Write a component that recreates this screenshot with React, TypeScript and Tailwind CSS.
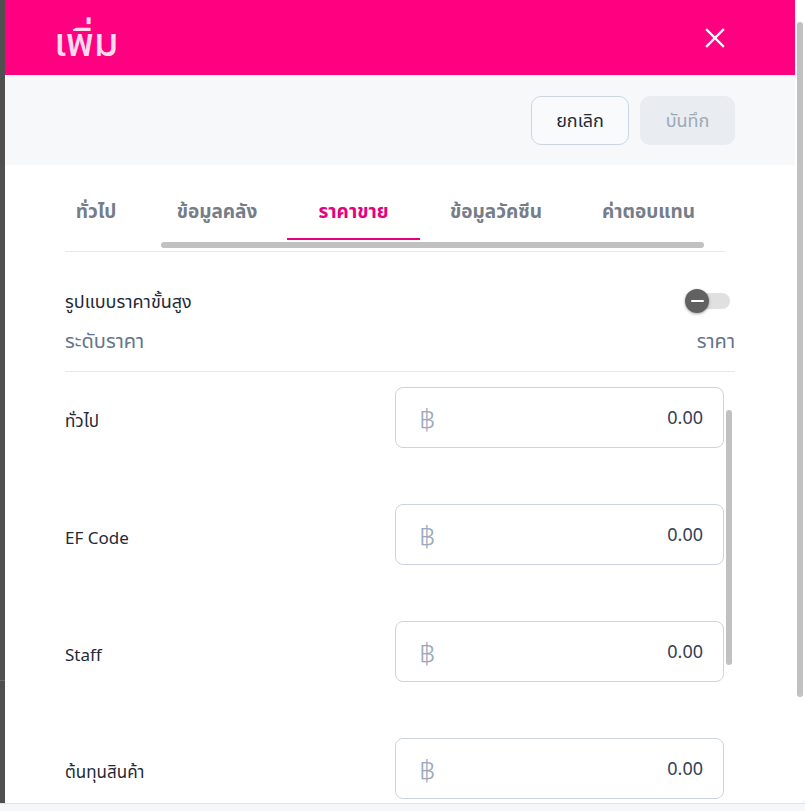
import React from "react";

const tabs = [
  { t: "ทั่วไป", w: "w-[102px]" },
  { t: "ข้อมูลคลัง", w: "w-[140px]" },
  { t: "ราคาขาย", w: "w-[133px]" },
  { t: "ข้อมูลวัคซีน", w: "w-[152px]" },
  { t: "ค่าตอบแทน", w: "w-[153px]" },
];
const rows = ["ทั่วไป", "EF Code", "Staff", "ต้นทุนสินค้า"];

function PriceInput() {
  return (
    <div className="w-[329px] h-[61px] shrink-0 rounded-[8px] border border-[#cbd5e1] bg-white flex items-center justify-between pl-[23px] pr-[20px]">
      <span className="text-[28px] font-light text-[#9aa8bc] leading-none">฿</span>
      <span className="text-[18px] text-[#334155]">0.00</span>
    </div>
  );
}

export default function App() {
  return (
    <div
      className="w-[805px] h-[811px] overflow-hidden bg-[#f5f7fa] flex flex-col"
      style={{ fontFamily: '"Noto Sans", "Noto Sans Thai", sans-serif' }}
    >
      <div className="h-[803px] flex shrink-0">
        {/* backdrop strip */}
        <div className="w-[5px] h-full bg-[#4f4f4f] flex flex-col">
          <div className="h-[680px]" />
          <div className="h-px bg-[#6a6a6a]" />
        </div>
        {/* modal */}
        <div className="w-[800px] h-full bg-white rounded-br-[6px] flex overflow-hidden">
          <div className="w-[790px] flex flex-col">
            {/* header */}
            <div className="h-[75px] shrink-0 bg-[#ff0080] flex items-center justify-between pl-[49px] pr-[70px]">
              <span className="mt-[6px] text-[40px] font-medium text-[#ffd9ec] leading-none">เพิ่ม</span>
              <svg width="20" height="20" viewBox="0 0 20 20" fill="none" stroke="white" strokeWidth="2.4" strokeLinecap="square">
                <path d="M2 2L18 18M18 2L2 18" />
              </svg>
            </div>
            {/* action bar */}
            <div className="h-[90px] shrink-0 bg-[#f7f8fa] flex items-center justify-end gap-[11px] pr-[60px]">
              <button className="w-[98px] h-[49px] rounded-[10px] border border-[#cbd5e1] bg-[#f8fafc] text-[18px] text-[#1f2937]">
                ยกเลิก
              </button>
              <button className="w-[95px] h-[49px] rounded-[10px] bg-[#e9ecf0] text-[18px] text-[#9ca9b9]">
                บันทึก
              </button>
            </div>
            {/* body */}
            <div className="flex-1 flex flex-col pt-[20px] px-[60px] min-h-0">
              {/* tabs */}
              <div className="-ml-[20px] flex">
                {tabs.map((tab, i) => (
                  <div
                    key={tab.t}
                    className={
                      tab.w +
                      (i === 2
                        ? " h-[55px] shrink-0 whitespace-nowrap flex items-center justify-center text-[19px] font-bold text-[#e6007e] border-b-2 border-[#e6007e]"
                        : " h-[55px] shrink-0 whitespace-nowrap flex items-center justify-center text-[19px] font-bold text-[#757d89] border-b-2 border-transparent")
                    }
                  >
                    {tab.t}
                  </div>
                ))}
              </div>
              <div className="mt-[2px] ml-[96px] w-[543px] h-[6px] rounded-full bg-[#c1c1c1]" />
              <div className="mt-[3px] mr-[10px] h-px bg-[#e5e7eb]" />
              {/* advanced price toggle */}
              <div className="mt-[36px] h-[26px] flex items-center justify-between">
                <span className="text-[18px] text-[#1f2937]">รูปแบบราคาขั้นสูง</span>
                <div className="flex items-center mr-[5px]">
                  <div className="relative z-10 w-[24px] h-[24px] rounded-full bg-[#616161] shadow-[0_1px_3px_rgba(0,0,0,0.35)] flex items-center justify-center">
                    <div className="w-[13px] h-[2px] bg-white rounded-full" />
                  </div>
                  <div className="-ml-[19px] w-[40px] h-[16px] rounded-full bg-[#e0e0e0]" />
                </div>
              </div>
              <div className="mt-[14px] h-[26px] flex items-center justify-between text-[20px] text-[#64748b]">
                <span>ระดับราคา</span>
                <span>ราคา</span>
              </div>
              <div className="mt-[17px] h-px bg-[#e2e8f0]" />
              {/* list */}
              <div className="flex-1 flex min-h-0 overflow-hidden">
                <div className="w-[659px] pt-[15px] flex flex-col gap-[56px]">
                  {rows.map((r) => (
                    <div key={r} className="flex items-center">
                      <span className="w-[330px] pt-[7px] text-[17px] text-[#1f2937]">{r}</span>
                      <PriceInput />
                    </div>
                  ))}
                </div>
                <div className="w-[11px] pl-[2px] pt-[38px]">
                  <div className="w-[6px] h-[255px] rounded-full bg-[#c1c1c1]" />
                </div>
              </div>
            </div>
          </div>
          {/* outer scrollbar */}
          <div className="w-[10px] pl-[2px] pt-[22px] bg-white">
            <div className="w-[6px] h-[675px] rounded-full bg-[#c1c1c1]" />
          </div>
        </div>
      </div>
      <div className="h-px bg-[#dde4ee]" />
    </div>
  );
}
